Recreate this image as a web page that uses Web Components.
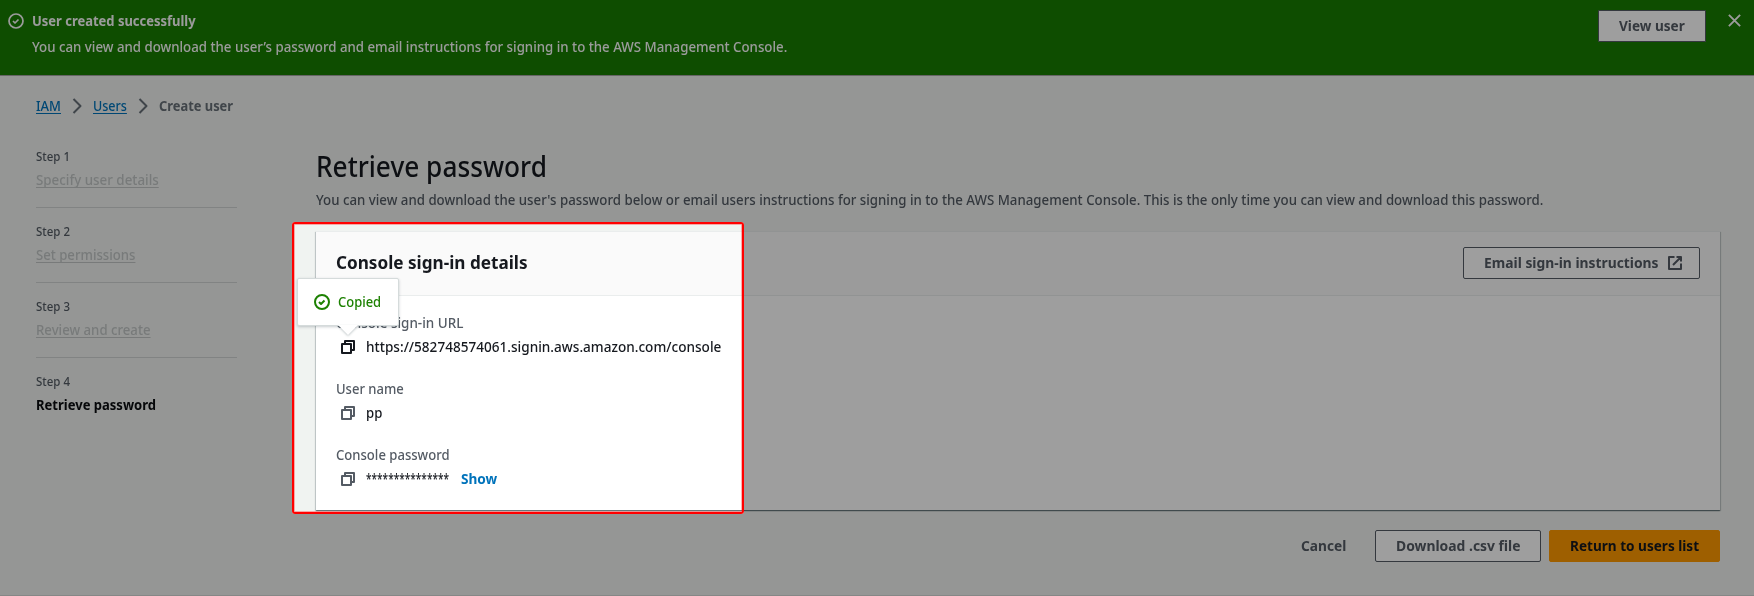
<!DOCTYPE html>
<html lang="en">
<head>
<meta charset="utf-8">
<title>Create user</title>
<style>
html,body{margin:0;padding:0}
body{width:1754px;height:596px;overflow:hidden;background:#f0f3f1;font-family:"Noto Sans","Open Sans",sans-serif;font-size:14px;line-height:22px;font-weight:480;color:#16191f}
</style>
</head>
<body>
<create-user-page></create-user-page>
<script>
// Single line of text, condensed horizontally to the given advance width.
class UiText extends HTMLElement {
  connectedCallback() {
    const r = this.attachShadow({mode: 'open'});
    r.innerHTML = `<style>
      :host{display:block;white-space:nowrap;flex:none}
      span{display:inline-block;vertical-align:top;transform-origin:0 0}
      :host([u]) span{text-decoration:underline;text-underline-offset:2px;text-decoration-thickness:1px;text-decoration-skip-ink:none}
      :host([b]){font-weight:700}
    </style><span><slot></slot></span>`;
    const w = parseFloat(this.getAttribute('w'));
    this.style.width = w + 'px';
    const s = r.querySelector('span');
    s.style.transform = `scaleX(${w / s.offsetWidth})`;
  }
}

class UiIcon extends HTMLElement {
  connectedCallback() {
    const p = {
      check: '<circle cx="8" cy="8" r="7"/><path d="M5 8l2 2 3.5-3.5"/>',
      close: '<path d="M2 2l12 12M14 2L2 14"/>',
      chevron: '<path d="M4.5 1l7 7-7 7"/>',
      copy: '<path d="M2 5h9v9H2z"/><path d="M5 5V2h9v9h-3"/>',
      external: '<path d="M14 8.5V14H2V2h5.5M9.5 2H14v4.5M6 10l8-8"/>'
    }[this.getAttribute('name')];
    this.attachShadow({mode: 'open'}).innerHTML = `<style>
      :host{display:block;width:16px;height:16px;flex:none}
      svg{display:block;width:100%;height:100%;overflow:visible;fill:none;stroke:currentColor;stroke-width:var(--stroke,2);stroke-linejoin:round}
    </style><svg viewBox="0 0 16 16">${p}</svg>`;
  }
}

class UiButton extends HTMLElement {
  connectedCallback() {
    this.attachShadow({mode: 'open'}).innerHTML = `<style>
      :host{display:flex;align-items:center;justify-content:center;gap:8px;box-sizing:border-box;height:32px;border:1px solid #545b64;border-radius:2px;background:#fff;color:#545b64;flex:none}
      :host([primary]){background:#f90;border-color:#f90;color:#16191f}
      :host([plain]){background:none;border-color:transparent}
    </style><slot></slot>`;
  }
}

class SuccessBanner extends HTMLElement {
  connectedCallback() {
    this.attachShadow({mode: 'open'}).innerHTML = `<style>
      :host{display:flex;box-sizing:border-box;height:76px;padding:10px 12px 0 8px;background:#177d00;color:#fafafa;border-bottom:1px solid #a4a4a4}
      .ic{padding-top:3px;margin-right:8px;--stroke:1.7}
      .t{display:flex;flex-direction:column;gap:4px;flex:1}
      ui-button{width:108px;height:32px;margin-right:21px;border-radius:1px}
      .x{width:15px;height:15px;margin-top:3px}
    </style>
    <div class="ic"><ui-icon name="check"></ui-icon></div>
    <div class="t"><ui-text b w="164">User created successfully</ui-text>
    <ui-text w="755" style="font-weight:500">You can view and download the user’s password and email instructions for signing in to the AWS Management Console.</ui-text></div>
    <ui-button><ui-text b w="66">View user</ui-text></ui-button>
    <ui-icon class="x" name="close"></ui-icon>`;
  }
}

class BreadCrumbs extends HTMLElement {
  connectedCallback() {
    this.attachShadow({mode: 'open'}).innerHTML = `<style>
      :host{display:flex;align-items:center;height:22px;color:#687078;font-weight:700}
      .l{color:#0073bb;font-weight:480}
      ui-icon{width:16px;height:16px;margin:0 8.5px 0 7.5px}
    </style>
    <ui-text class="l" u w="25">IAM</ui-text><ui-icon name="chevron"></ui-icon>
    <ui-text class="l" u w="34">Users</ui-text><ui-icon name="chevron"></ui-icon>
    <ui-text w="74.5">Create user</ui-text>`;
  }
}

class WizardStep extends HTMLElement {
  connectedCallback() {
    this.attachShadow({mode: 'open'}).innerHTML = `<style>
      :host{display:block;box-sizing:border-box;width:201px;height:59px;margin-bottom:16px;border-bottom:1px solid #d0d3d3}
      :host([last]){border:0}
      .n{font-size:12px;line-height:16px;color:#545b64;margin-bottom:4px}
      .l{color:#c2c6c6}
      :host([last]) .l{color:#0a0c10;font-weight:700}
    </style>
    <ui-text class="n" w="34.5">Step ${this.getAttribute('n')}</ui-text>
    <ui-text class="l" ${this.hasAttribute('last') ? '' : 'u'} w="${this.getAttribute('w')}">${this.textContent}</ui-text>`;
  }
}

class CopyField extends HTMLElement {
  connectedCallback() {
    this.attachShadow({mode: 'open'}).innerHTML = `<style>
      :host{display:block;height:46px}
      .k{color:#545b64;margin-bottom:2px}
      .v{display:flex;align-items:center;height:22px;padding-left:4px}
      .i{position:relative;margin-right:10px;color:#545b64}
      :host([active]) .i{color:#16191f}
    </style>
    <ui-text class="k" w="${this.getAttribute('w')}">${this.getAttribute('label')}</ui-text>
    <div class="v"><div class="i"><ui-icon name="copy"></ui-icon><slot name="tip"></slot></div><slot></slot></div>`;
  }
}

class CopiedTip extends HTMLElement {
  connectedCallback() {
    this.attachShadow({mode: 'open'}).innerHTML = `<style>
      :host{position:absolute;left:-43px;top:-61px;z-index:2;box-sizing:border-box;width:102px;height:48px;display:flex;align-items:center;gap:8px;padding-left:16px;background:#fff;border:1px solid #d5dbdb;border-radius:2px;box-shadow:0 1px 3px rgba(0,28,36,.22);color:#1d8102}
      .a{position:absolute;left:40px;top:46px;width:20px;height:10px}
      .a svg{display:block;overflow:visible;filter:drop-shadow(0 1px 1px rgba(0,28,36,.25))}
    </style>
    <ui-icon name="check"></ui-icon><ui-text w="43.5">Copied</ui-text>
    <div class="a"><svg width="20" height="10"><path d="M0 0L10 10L20 0z" fill="#fff"/></svg></div>`;
  }
}

class DetailsCard extends HTMLElement {
  connectedCallback() {
    this.attachShadow({mode: 'open'}).innerHTML = `<style>
      :host{display:block;box-sizing:border-box;width:1404px;height:279px;background:#fff;border-top:1px solid #eaeded;box-shadow:0 1px 1px 0 rgba(0,28,36,.4),1px 1px 1px 0 rgba(0,28,36,.15),-1px 1px 1px 0 rgba(0,28,36,.15)}
      .h{display:flex;justify-content:space-between;box-sizing:border-box;height:64px;padding:15px 20px 0;background:#fafafa;border-bottom:1px solid #eaeded}
      .h>ui-text{font-size:18px;line-height:30px}
      ui-button{width:237px;padding-left:3px}
      .b{display:grid;gap:20px;padding:16px 20px 0}
    </style>
    <div class="h"><ui-text b w="191.5">Console sign-in details</ui-text>
    <ui-button><ui-text b w="175">Email sign-in instructions</ui-text><ui-icon name="external"></ui-icon></ui-button></div>
    <div class="b">
      <copy-field active label="Console sign-in URL" w="127"><copied-tip slot="tip"></copied-tip><ui-text w="355">https://582748574061.signin.aws.amazon.com/console</ui-text></copy-field>
      <copy-field label="User name" w="68"><ui-text w="16">pp</ui-text></copy-field>
      <copy-field label="Console password" w="114"><ui-text w="83">***************</ui-text><ui-text b w="36" style="color:#0073bb;margin-left:12px">Show</ui-text></copy-field>
    </div>`;
  }
}

// Outlined highlight that dims everything outside of it.
class SpotLight extends HTMLElement {
  connectedCallback() {
    this.attachShadow({mode: 'open'}).innerHTML = `<style>
      :host{position:absolute;left:292px;top:222px;width:452px;height:292px;box-sizing:border-box;border:2px solid #f00;border-radius:3px;box-shadow:0 0 0 2000px rgba(0,0,0,.38),inset 0 0 0 1px rgba(255,0,0,.3);z-index:5;pointer-events:none}
    </style>`;
  }
}

class CreateUserPage extends HTMLElement {
  connectedCallback() {
    this.attachShadow({mode: 'open'}).innerHTML = `<style>
      :host{display:block;position:relative;box-sizing:border-box;width:1754px;height:596px;overflow:hidden;border-bottom:1px solid #858786}
      bread-crumbs{margin:19px 0 0 36px}
      .m{display:grid;grid-template-columns:200px 1404px;column-gap:80px;padding-left:36px}
      nav{padding-top:32px;display:grid;align-content:start}
      main{padding-top:31px}
      .t{font-size:28px;line-height:36px}
      .d{color:#545b64;margin:5px 0 20px}
      footer{display:flex;justify-content:flex-end;padding-top:20px}
    </style>
    <success-banner></success-banner>
    <bread-crumbs></bread-crumbs>
    <div class="m">
      <nav>
        <wizard-step n="1" w="123">Specify user details</wizard-step>
        <wizard-step n="2" w="99.5">Set permissions</wizard-step>
        <wizard-step n="3" w="115">Review and create</wizard-step>
        <wizard-step n="4" w="120" last>Retrieve password</wizard-step>
      </nav>
      <main>
        <ui-text class="t" w="230.5">Retrieve password</ui-text>
        <ui-text class="d" w="1227">You can view and download the user's password below or email users instructions for signing in to the AWS Management Console. This is the only time you can view and download this password.</ui-text>
        <details-card></details-card>
        <footer>
          <ui-button plain style="width:88px;margin-right:8px"><ui-text b w="45">Cancel</ui-text></ui-button>
          <ui-button style="width:166px;margin-right:8px"><ui-text b w="125">Download .csv file</ui-text></ui-button>
          <ui-button primary style="width:171px"><ui-text b w="129">Return to users list</ui-text></ui-button>
        </footer>
      </main>
    </div>
    <spot-light></spot-light>`;
  }
}

customElements.define('ui-text', UiText);
customElements.define('ui-icon', UiIcon);
customElements.define('ui-button', UiButton);
customElements.define('success-banner', SuccessBanner);
customElements.define('bread-crumbs', BreadCrumbs);
customElements.define('wizard-step', WizardStep);
customElements.define('copy-field', CopyField);
customElements.define('copied-tip', CopiedTip);
customElements.define('details-card', DetailsCard);
customElements.define('spot-light', SpotLight);
customElements.define('create-user-page', CreateUserPage);
</script>
</body>
</html>
